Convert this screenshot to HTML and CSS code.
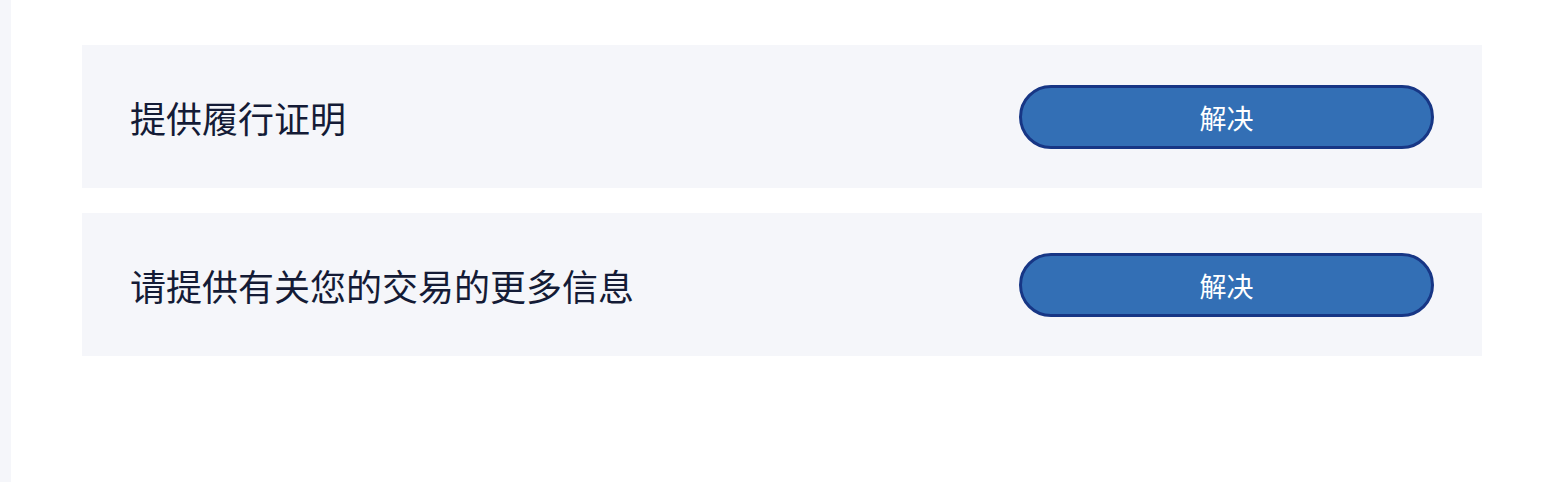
FILE: index.html
```html
<!DOCTYPE html>
<html lang="zh-CN">
<head>
<meta charset="utf-8">
<link rel="stylesheet" href="styles.css">
</head>
<body>
<div class="layout">
  <aside class="side"></aside>
  <main class="main">
    <div class="task">
      <div class="task-title">提供履行证明</div>
      <button class="btn">解决</button>
    </div>
    <div class="task">
      <div class="task-title">请提供有关您的交易的更多信息</div>
      <button class="btn">解决</button>
    </div>
  </main>
</div>
</body>
</html>
```
FILE: styles.css
```css
html, body {
  margin: 0;
  padding: 0;
  background: #ffffff;
  font-family: "Noto Sans CJK SC", "Noto Sans", sans-serif;
}
.layout {
  display: flex;
  min-height: 482px;
}
.side {
  width: 11px;
  flex: none;
  background: #f5f6fa;
}
.main {
  flex: 1;
  padding: 45px 60px 0 71px;
  display: flex;
  flex-direction: column;
  gap: 25px;
}
.task {
  height: 143px;
  background: #f5f6fa;
  display: flex;
  align-items: center;
  justify-content: space-between;
  padding: 0 48px 0 48px;
  box-sizing: border-box;
}
.task-title {
  font-size: 36px;
  color: #141b36;
  line-height: 1;
}
.btn {
  width: 415px;
  height: 64px;
  border: 3px solid #173685;
  border-radius: 32px;
  background: #336fb5;
  color: #ffffff;
  font-family: "Noto Sans CJK SC", "Noto Sans", sans-serif;
  font-size: 27px;
  padding: 0;
  margin-top: 1px;
  cursor: pointer;
}
```
